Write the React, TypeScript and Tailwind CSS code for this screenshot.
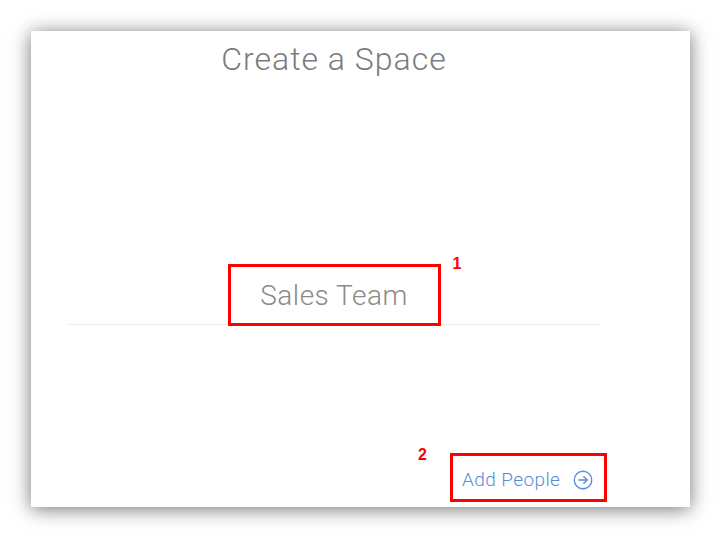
import React from "react";

export default function App() {
  return (
    <div className="w-[720px] h-[537px] bg-white p-[31px]" style={{ fontFamily: '"Liberation Sans", Arial, sans-serif' }}>
      <div className="w-[659px] h-[476px] bg-white shadow-[0_2px_18px_rgba(0,0,0,0.55)] flex flex-col pl-[37px] pr-[90px]">
        <h1 className="text-center text-[32px] leading-[36px] text-[#7b7b7b] mt-[10px] tracking-[1px]" style={{ fontFamily: 'Roboto, "Liberation Sans", sans-serif', fontWeight: 300 }}>
          Create a Space
        </h1>
        <div className="mt-[187px] flex justify-center border-b border-[#ececec]">
          <div className="relative -mb-[2px]">
            <div className="w-[213px] h-[62px] border-[3px] border-[#ff0000] flex items-center justify-center pt-[1px]">
              <span className="text-[28px] tracking-[0.5px] text-[#8a8a8a]" style={{ fontFamily: 'Roboto, "Liberation Sans", sans-serif', fontWeight: 300 }}>Sales Team</span>
            </div>
            <span className="absolute left-[225px] -top-[12px] text-[16px] font-bold text-[#ff0000]" style={{ fontFamily: '"Liberation Sans", Arial, sans-serif' }}>1</span>
          </div>
        </div>
        <div className="mt-[128px] flex justify-end -mr-[7px]">
          <div className="relative">
            <span className="absolute -left-[32px] -top-[10px] text-[16px] font-bold text-[#ff0000]">2</span>
            <div className="w-[157px] h-[49px] border-[3px] border-[#ff0000] flex items-center pl-[9px] pt-[5px] gap-[13px]">
              <span className="text-[19px] tracking-[0.4px] text-[#5a8dd6]" style={{ fontFamily: 'Roboto, "Liberation Sans", sans-serif', fontWeight: 300 }}>Add People</span>
              <svg width="20" height="20" viewBox="0 0 24 24" fill="none" stroke="#5a8dd6" strokeWidth="1.6" strokeLinecap="round" strokeLinejoin="round">
                <circle cx="12" cy="12" r="10.5" />
                <path d="M7 12h10" />
                <path d="M13 8l4 4-4 4" />
              </svg>
            </div>
          </div>
        </div>
      </div>
    </div>
  );
}
